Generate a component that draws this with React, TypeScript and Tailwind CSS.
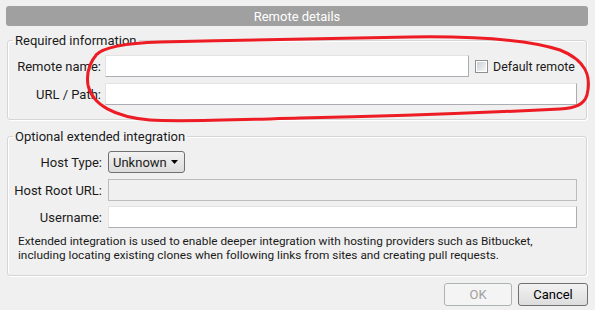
export default function App() {
  return (
    <div
      className="relative w-[595px] h-[310px] overflow-hidden bg-[#f0f0f0] pl-[6px] pt-[6px] text-[#1a1a1a] text-[13px] leading-[15px]"
      style={{ fontFamily: 'Roboto, "Noto Sans", sans-serif' }}
    >
      <div className="w-[582px]">
        <div className="flex h-[20px] items-center justify-center rounded-[3px] bg-[#a0a0a0] text-[13px] leading-[15px] text-white">
          Remote details
        </div>

        <fieldset className="mx-[1px] mt-[7px] min-w-0 rounded-[3px] border border-[#d5d5d5] pb-[14px] pr-[9px] shadow-[inset_1px_1px_0_#ffffff,1px_1px_0_#ffffff]">
          <legend className="ml-[5px] h-[15px] px-[2px] text-[13px] leading-[15px]">Required information</legend>
          <div className="mt-[7px] flex items-center">
            <label className="w-[93px] shrink-0 whitespace-nowrap text-right">Remote name:</label>
            <input className="ml-[4px] h-[22px] w-[364px] shrink-0 border border-[#abadb3] border-t-[#e3e3e3] border-l-[#e3e3e3] bg-white outline-none" />
            <span className="ml-[6px] flex h-[13px] w-[13px] shrink-0 items-center justify-center border border-[#8e8f8f] bg-white">
              <span className="h-[9px] w-[9px] bg-gradient-to-br from-[#cbcfd5] to-[#f7f7f7]" />
            </span>
            <span className="ml-[5px] whitespace-nowrap text-[12.4px]">Default remote</span>
          </div>
          <div className="mt-[6px] flex items-center">
            <label className="w-[93px] shrink-0 whitespace-nowrap text-right">URL / Path:</label>
            <input className="ml-[4px] h-[22px] min-w-0 flex-1 border border-[#abadb3] border-t-[#e3e3e3] border-l-[#e3e3e3] bg-white outline-none" />
          </div>
        </fieldset>

        <fieldset className="mx-[1px] mt-[9px] min-w-0 rounded-[3px] border border-[#d5d5d5] pb-[13px] pr-[9px] shadow-[inset_1px_1px_0_#ffffff,1px_1px_0_#ffffff]">
          <legend className="ml-[5px] h-[15px] px-[2px] text-[13px] leading-[15px]">Optional extended integration</legend>
          <div className="mt-[7px] flex items-center">
            <label className="w-[94px] shrink-0 whitespace-nowrap text-right">Host Type:</label>
            <div className="ml-[6px] flex h-[22px] w-[77px] items-center justify-between rounded-[3px] border border-[#707070] bg-gradient-to-b from-[#f2f2f2] to-[#dcdcdc] pl-[4px] pr-[6px]">
              <span>Unknown</span>
              <svg width="7" height="4" viewBox="0 0 7 4">
                <path d="M0 0 H7 L3.5 4 Z" fill="#000" />
              </svg>
            </div>
          </div>
          <div className="mt-[6px] flex items-center">
            <label className="w-[94px] shrink-0 whitespace-nowrap text-right">Host Root URL:</label>
            <input
              disabled
              className="ml-[6px] h-[22px] min-w-0 flex-1 border border-[#bcbcbc] bg-[#f0f0f0] outline-none"
            />
          </div>
          <div className="mt-[5px] flex items-center">
            <label className="w-[94px] shrink-0 whitespace-nowrap text-right">Username:</label>
            <input className="ml-[6px] h-[22px] min-w-0 flex-1 border border-[#abadb3] border-t-[#e3e3e3] border-l-[#e3e3e3] bg-white outline-none" />
          </div>
          <p className="mt-[6px] whitespace-nowrap pl-[10px] text-[11.8px] leading-[14px]">
            Extended integration is used to enable deeper integration with hosting providers such as Bitbucket,
            <br />
            including locating existing clones when following links from sites and creating pull requests.
          </p>
        </fieldset>

        <div className="mt-[7px] flex justify-end gap-[6px]">
          <button
            disabled
            className="h-[23px] w-[68px] rounded-[3px] border border-[#adb2b5] bg-[#f4f4f4] text-[13px] text-[#a0a0a0]"
          >
            OK
          </button>
          <button className="h-[23px] w-[70px] rounded-[3px] border border-[#707070] bg-gradient-to-b from-[#f2f2f2] to-[#dddddd] text-[13px] text-black">
            Cancel
          </button>
        </div>
      </div>

      <svg
        className="pointer-events-none absolute left-0 top-0"
        width="595"
        height="310"
        viewBox="0 0 595 310"
      >
        <path
          d="M96 55 C 104 46, 130 43, 160 42 C 250 40, 350 38, 410 37 C 480 36, 530 40, 560 50 C 585 60, 592 75, 587 95 C 584 105, 575 108, 560 109 C 500 112, 400 116, 300 118 C 230 120, 180 122, 150 120 C 115 117, 92 105, 88 85 C 86 72, 90 62, 97 54"
          fill="none"
          stroke="#ed1c24"
          strokeWidth="3"
          strokeLinecap="round"
        />
      </svg>
    </div>
  );
}
